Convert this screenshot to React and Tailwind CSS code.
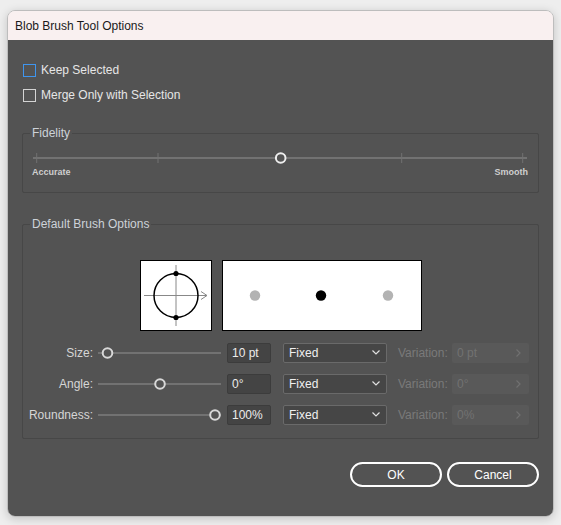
import React from 'react'

const font = { fontFamily: '"Liberation Sans", Arial, sans-serif' }

function Checkbox({ label, color }) {
  return (
    <div className="flex items-center h-[25px] text-[12px] text-[#e6e6e6]">
      <svg width="13" height="13" className="block ml-[1px] mt-[2px]">
        <rect x="0.5" y="0.5" width="12" height="12" fill="none" stroke={color} strokeWidth="1" />
      </svg>
      <span className="ml-[5px]">{label}</span>
    </div>
  )
}

function FidelitySlider() {
  const ticks = [3.7, 125, 368.7, 489.7]
  return (
    <svg width="495" height="12" className="block">
      <line x1="0" y1="6" x2="494" y2="6" stroke="#727272" strokeWidth="2" />
      {ticks.map(t => <line key={t} x1={t} y1="1" x2={t} y2="11" stroke="#727272" strokeWidth="1" />)}
      <circle cx="247.7" cy="6" r="4.8" fill="#535353" stroke="#eeeeee" strokeWidth="2" />
    </svg>
  )
}

function RowSlider({ pos }) {
  return (
    <svg width="124" height="14" className="block">
      <line x1="0" y1="7" x2="123" y2="7" stroke="#727272" strokeWidth="2" />
      <circle cx={pos} cy="7" r="4.8" fill="#535353" stroke="#d8d8d8" strokeWidth="2" />
    </svg>
  )
}

function Row({ label, pos, value, variation }) {
  return (
    <div className="flex items-center h-[31px] text-[12px]">
      <div className="w-[70px] text-right text-[#d6d6d6]">{label}</div>
      <div className="ml-[5px]"><RowSlider pos={pos} /></div>
      <div className="ml-[5px] w-[44px] h-[20px] bg-[#444444] border border-[#3c3c3c] rounded-[2px] flex items-center pl-[4px] text-[#ececec]">{value}</div>
      <div className="ml-[12px] w-[104px] h-[20px] bg-[#464646] border border-[#6a6a6a] rounded-[2px] flex items-center justify-between pl-[5px] pr-[6px] text-[#f0f0f0]">
        <span>Fixed</span>
        <svg width="8" height="5"><path d="M0.5 0.5 L4 4 L7.5 0.5" fill="none" stroke="#e0e0e0" strokeWidth="1.2" /></svg>
      </div>
      <span className="ml-[11px] w-[54px] text-[#7a7a7a]">Variation:</span>
      <div className="w-[77px] h-[20px] bg-[#595959] rounded-[2px] flex items-center justify-between pl-[5px] pr-[8px] text-[#727272]">
        <span>{variation}</span>
        <svg width="5" height="8"><path d="M0.5 0.5 L4 4 L0.5 7.5" fill="none" stroke="#707070" strokeWidth="1.2" /></svg>
      </div>
    </div>
  )
}

export default function App() {
  return (
    <div className="w-[561px] h-[525px] bg-[#eeeeee] pt-[10px] pl-[7px]" style={font}>
      <div className="w-[547px] h-[507px] rounded-[8px] border border-[#bdbdbd] overflow-hidden flex flex-col shadow-[0_2px_10px_rgba(0,0,0,0.18)]">
        <div className="h-[29px] bg-[#f9f0f0] flex items-center pl-[7px] text-[12px] text-[#1a1a1a]">Blob Brush Tool Options</div>
        <div className="flex-1 bg-[#535353] px-[14px] pt-[17px]">
          <Checkbox label="Keep Selected" color="#3f95ee" />
          <Checkbox label="Merge Only with Selection" color="#d4d4d4" />

          <fieldset className="mt-[18px] h-[68px] border border-[#474747] rounded-[2px]">
            <legend className="ml-[7px] px-[2px] text-[12px] leading-[16px] text-[#cdd2d8]">Fidelity</legend>
            <div className="ml-[10px] mt-[11px]"><FidelitySlider /></div>
            <div className="mt-[2px] ml-[9px] mr-[10px] flex justify-between text-[9px] leading-[12px] font-bold text-[#cfcfcf]">
              <span>Accurate</span>
              <span>Smooth</span>
            </div>
          </fieldset>

          <fieldset className="mt-[23px] h-[223px] border border-[#474747] rounded-[2px]">
            <legend className="ml-[7px] px-[2px] text-[12px] leading-[16px] text-[#cdd2d8]">Default Brush Options</legend>
            <div className="mt-[28px] flex justify-center gap-[10px]">
              <div className="w-[72px] h-[71px] border border-black bg-white">
                <svg width="70" height="69" className="block">
                  <line x1="3" y1="34.5" x2="66" y2="34.5" stroke="#888888" strokeWidth="1" />
                  <polyline points="60,30.5 66,34.5 60,38.5" fill="none" stroke="#888888" strokeWidth="1" />
                  <line x1="35" y1="4" x2="35" y2="65" stroke="#888888" strokeWidth="1" />
                  <circle cx="35" cy="34.5" r="22" fill="none" stroke="#000000" strokeWidth="1.5" />
                  <circle cx="35" cy="12.5" r="2.6" fill="#000000" />
                  <circle cx="35" cy="56.5" r="2.6" fill="#000000" />
                </svg>
              </div>
              <div className="w-[200px] h-[71px] border border-black bg-white">
                <svg width="198" height="69" className="block">
                  <circle cx="32" cy="34.5" r="5.2" fill="#b3b3b3" />
                  <circle cx="98" cy="34.5" r="5.2" fill="#000000" />
                  <circle cx="165" cy="34.5" r="5.2" fill="#b3b3b3" />
                </svg>
              </div>
            </div>
            <div className="mt-[6px]">
              <Row label="Size:" pos={9.5} value="10 pt" variation="0 pt" />
              <Row label="Angle:" pos={62} value="0°" variation="0°" />
              <Row label="Roundness:" pos={117} value="100%" variation="0%" />
            </div>
          </fieldset>

          <div className="mt-[23px] flex justify-end gap-[5px]">
            <button className="w-[92px] h-[25px] rounded-full border-2 border-white text-[12px] text-white">OK</button>
            <button className="w-[92px] h-[25px] rounded-full border-2 border-white text-[12px] text-white">Cancel</button>
          </div>
        </div>
      </div>
    </div>
  )
}
